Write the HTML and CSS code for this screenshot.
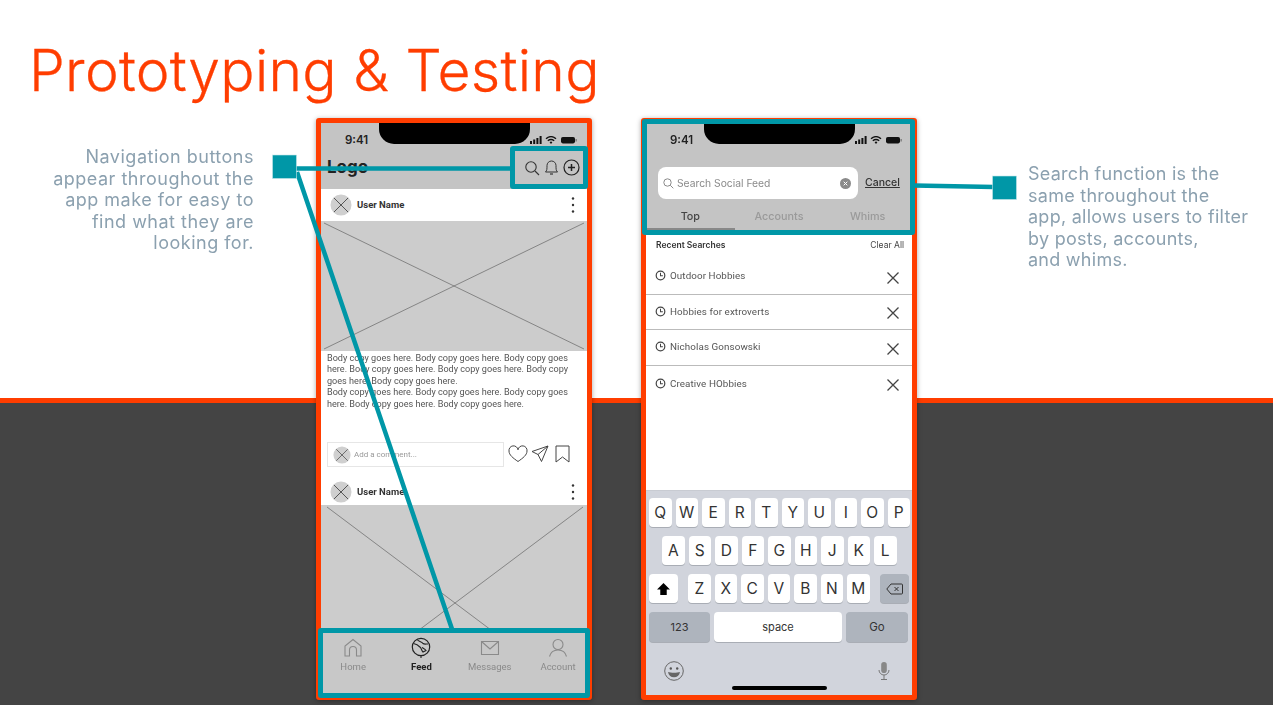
FILE: index.html
```html
<!DOCTYPE html>
<html lang="en">
<head>
<meta charset="utf-8">
<title>Prototyping &amp; Testing</title>
<link rel="stylesheet" href="styles.css">
</head>
<body>
<svg class="defs" width="0" height="0" aria-hidden="true">
  <symbol id="status" viewBox="0 0 47 8">
    <rect x="0" y="5" width="2" height="3" fill="#111"/><rect x="3.2" y="3.5" width="2" height="4.5" fill="#111"/><rect x="6.4" y="2" width="2" height="6" fill="#111"/><rect x="9.6" y="0" width="2" height="8" fill="#111"/>
    <path d="M16 2.8c3-2.6 7-2.6 10 0M17.8 4.8c2-1.6 4.400-1.600 6.400 0" fill="none" stroke="#111" stroke-width="1.400"/><path d="M19.600 6.200c1-.8 1.800-.8 2.800 0L21 8z" fill="#111"/>
    <rect x="31" y="1" width="14" height="6.400" rx="1.800" fill="#111"/><rect x="45.500" y="3" width="1.300" height="2.500" fill="#777"/>
  </symbol>
  <symbol id="ximg" viewBox="0 0 22 22">
    <circle cx="11" cy="11" r="10.500" fill="#cfcfcf"/><path d="M4 4l14 14M18 4L4 18" stroke="#555" stroke-width="1"/>
  </symbol>
  <symbol id="dots" viewBox="0 0 4 18">
    <circle cx="2" cy="2.500" r="1.200" fill="#333"/><circle cx="2" cy="9" r="1.200" fill="#333"/><circle cx="2" cy="15.500" r="1.200" fill="#333"/>
  </symbol>
  <symbol id="clock" viewBox="0 0 12 12">
    <circle cx="6" cy="6" r="4.700" fill="none" stroke="#444" stroke-width="1.300"/><path d="M6 3v3.200h2.600" fill="none" stroke="#444" stroke-width="1.100"/>
  </symbol>
  <symbol id="cross" viewBox="0 0 14 14">
    <path d="M1.500 1.500l11 11M12.500 1.500l-11 11" stroke="#444" stroke-width="1.300"/>
  </symbol>
</svg>

<div class="slide">
  <div class="band-top"></div>
  <div class="band-bottom"></div>

  <div class="stage">
    <h1 class="title">Prototyping &amp; Testing</h1>
    <div class="row">
      <p class="callout callout-left">Navigation buttons<br>appear throughout the<br>app make for easy to<br>find what they are<br>looking for.</p>

      <section class="phone phone-feed">
        <header class="head head-feed">
          <div class="status"><span class="time">9:41</span><div class="notch"></div><svg class="status-icons"><use href="#status"/></svg></div>
          <div class="navrow">
            <span class="logo">Logo</span>
            <div class="nav-icons">
              <svg width="16" height="16" viewBox="0 0 16 16"><circle cx="7" cy="7" r="5.200" fill="none" stroke="#333" stroke-width="1.100"/><path d="M11 11l4 4" stroke="#333" stroke-width="1.100"/></svg>
              <svg width="15" height="17" viewBox="0 0 15 17"><path d="M1.500 13c1.500-1.500 1.500-3 1.500-6.500a4.500 4.500 0 0 1 9 0c0 3.500 0 5 1.500 6.500z" fill="none" stroke="#333" stroke-width="1"/><path d="M6 15h3" stroke="#333" stroke-width="1.200"/></svg>
              <svg width="17" height="17" viewBox="0 0 17 17"><circle cx="8.500" cy="8.500" r="7.500" fill="none" stroke="#222" stroke-width="1.200"/><path d="M8.500 5v7M5 8.500h7" stroke="#222" stroke-width="1.500"/></svg>
            </div>
          </div>
        </header>
        <div class="user user-a"><svg class="avatar"><use href="#ximg"/></svg><span class="uname">User Name</span><svg class="dots"><use href="#dots"/></svg></div>
        <div class="img img-a"><svg viewBox="0 0 266 130" preserveAspectRatio="none"><path d="M3 2l260 126M3 128L263 2" stroke="#666" stroke-width=".7"/></svg></div>
        <div class="body-copy">Body copy goes here. Body copy goes here. Body copy goes here. Body copy goes here. Body copy goes here. Body copy goes here. Body copy goes here.<br>Body copy goes here. Body copy goes here. Body copy goes here. Body copy goes here. Body copy goes here.</div>
        <div class="actions">
          <div class="comment"><svg class="avatar-s"><use href="#ximg"/></svg><span>Add a comment...</span></div>
          <svg width="20" height="18" viewBox="0 0 20 18"><path d="M10 16.500C5 13 1 10 1 6a4.500 4.500 0 0 1 9-1.200A4.500 4.500 0 0 1 19 6c0 4-4 7-9 10.500z" fill="none" stroke="#444" stroke-width="1"/></svg>
          <svg class="plane" width="18" height="18" viewBox="0 0 18 18"><path d="M17 1L1 6.500l6 3 3.500 7zM17 1L7 9.500" fill="none" stroke="#444" stroke-width="1"/></svg>
          <svg class="mark" width="15" height="18" viewBox="0 0 15 18"><path d="M1 1h13v16l-6.500-5L1 17z" fill="none" stroke="#444" stroke-width="1"/></svg>
        </div>
        <div class="user user-b"><svg class="avatar"><use href="#ximg"/></svg><span class="uname">User Name</span><svg class="dots"><use href="#dots"/></svg></div>
        <div class="img img-b"><svg viewBox="0 0 266 196" preserveAspectRatio="none"><path d="M6 2l256 192M262 2L6 194" stroke="#666" stroke-width=".7"/></svg></div>
        <nav class="tabs">
          <div class="tab"><svg width="20" height="20" viewBox="0 0 20 20"><path d="M2 18V8l8-6.500L18 8v10h-4.500v-6a3.500 3.500 0 0 0-7 0v6z" fill="none" stroke="#8a8a8a" stroke-width="1.100"/></svg><span>Home</span></div>
          <div class="tab tab-on"><svg class="feed-icon" width="20" height="22" viewBox="0 0 20 22"><circle cx="10" cy="10" r="8.700" fill="none" stroke="#222" stroke-width="1.200"/><path d="M2.500 6.500c3 .5 5 2 7 4 1 1.500 1 3 2.500 4.500l3-1.500c-1-1.500-2.500-2-4-3M6 2.500c2 2.500 5 2 6 4 1 1 3 .5 5 .5M10 18v3" fill="none" stroke="#222" stroke-width="1.100"/></svg><span>Feed</span></div>
          <div class="tab"><svg width="20" height="20" viewBox="0 0 20 20"><path d="M1.500 3.500h17v13h-17zM1.500 3.500L10 11l8.500-7.500" fill="none" stroke="#8a8a8a" stroke-width="1.100"/></svg><span>Messages</span></div>
          <div class="tab"><svg width="20" height="20" viewBox="0 0 20 20"><circle cx="10" cy="6.500" r="5" fill="none" stroke="#8a8a8a" stroke-width="1.100"/><path d="M1.500 18.500c1-4 4-6.500 8.500-6.500s7.500 2.500 8.500 6.500" fill="none" stroke="#8a8a8a" stroke-width="1.100"/></svg><span>Account</span></div>
        </nav>
        <div class="teal teal-nav"></div>
        <div class="teal teal-tabs"></div>
      </section>

      <section class="phone phone-search">
        <header class="head head-search">
          <div class="status"><span class="time">9:41</span><div class="notch"></div><svg class="status-icons"><use href="#status"/></svg></div>
          <div class="search-row">
            <div class="search-box">
              <svg width="11" height="11" viewBox="0 0 11 11"><circle cx="4.500" cy="4.500" r="3.700" fill="none" stroke="#8a8a8a" stroke-width="1"/><path d="M7.300 7.300l3 3" stroke="#8a8a8a" stroke-width="1"/></svg>
              <span class="placeholder">Search Social Feed</span>
              <svg class="clear" width="11" height="11" viewBox="0 0 11 11"><circle cx="5.500" cy="5.500" r="5.500" fill="#8a8a8a"/><path d="M3.700 3.700l3.600 3.600M7.300 3.700L3.700 7.300" stroke="#fff" stroke-width="1"/></svg>
            </div>
            <span class="cancel">Cancel</span>
          </div>
          <div class="seg"><span class="seg-item seg-on">Top</span><span class="seg-item">Accounts</span><span class="seg-item">Whims</span></div>
        </header>
        <div class="recent"><strong>Recent Searches</strong><span>Clear All</span></div>
        <ul class="results">
          <li class="result"><svg class="clock"><use href="#clock"/></svg><span>Outdoor Hobbies</span><svg class="cross"><use href="#cross"/></svg></li>
          <li class="result"><svg class="clock"><use href="#clock"/></svg><span>Hobbies for extroverts</span><svg class="cross"><use href="#cross"/></svg></li>
          <li class="result"><svg class="clock"><use href="#clock"/></svg><span>Nicholas Gonsowski</span><svg class="cross"><use href="#cross"/></svg></li>
          <li class="result"><svg class="clock"><use href="#clock"/></svg><span>Creative HObbies</span><svg class="cross"><use href="#cross"/></svg></li>
        </ul>
        <div class="keyboard">
          <div class="keys"><span class="key">Q</span><span class="key">W</span><span class="key">E</span><span class="key">R</span><span class="key">T</span><span class="key">Y</span><span class="key">U</span><span class="key">I</span><span class="key">O</span><span class="key">P</span></div>
          <div class="keys keys-mid"><span class="key">A</span><span class="key">S</span><span class="key">D</span><span class="key">F</span><span class="key">G</span><span class="key">H</span><span class="key">J</span><span class="key">K</span><span class="key">L</span></div>
          <div class="keys">
            <span class="key key-wide"><svg width="13" height="12" viewBox="0 0 14 13"><path d="M7 0l7 7h-3.500v6h-7V7H0z" fill="#000"/></svg></span>
            <span class="key key-z">Z</span><span class="key">X</span><span class="key">C</span><span class="key">V</span><span class="key">B</span><span class="key">N</span><span class="key">M</span>
            <span class="key key-wide key-dark key-back"><svg width="17" height="12" viewBox="0 0 17 12"><path d="M5 1h10.500a1 1 0 0 1 1 1v8a1 1 0 0 1-1 1H5L.8 6zM8.500 4l4 4M12.500 4l-4 4" fill="none" stroke="#333" stroke-width="1"/></svg></span>
          </div>
          <div class="keys keys-bottom"><span class="key key-dark key-num">123</span><span class="key key-space">space</span><span class="key key-dark key-go">Go</span></div>
          <div class="kb-foot">
            <svg width="20" height="20" viewBox="0 0 20 20"><circle cx="10" cy="10" r="9.300" fill="none" stroke="#666" stroke-width="1"/><circle cx="6.800" cy="7.500" r="1.200" fill="#555"/><circle cx="13.200" cy="7.500" r="1.200" fill="#555"/><path d="M4 11c3 1 9 1 12 0-.5 3.500-3 5.300-6 5.300S4.500 14.500 4 11z" fill="#666"/></svg>
            <svg width="12" height="20" viewBox="0 0 12 20"><rect x="3.200" y="1" width="5.600" height="11" rx="2.800" fill="#888"/><path d="M1 9a5 5 0 0 0 10 0M6 14v4M3 18.500h6" fill="none" stroke="#777" stroke-width="1"/></svg>
          </div>
          <div class="home-bar"></div>
        </div>
        <div class="teal teal-search"></div>
      </section>

      <p class="callout callout-right">Search function is the<br>same throughout the<br>app, allows users to filter<br>by posts, accounts,<br>and whims.</p>
    </div>
  </div>

  <svg class="connectors" width="1273" height="705" viewBox="0 0 1273 705" aria-hidden="true">
    <path d="M295 168.500h218M297 172l156 460M914 185.500l80 1.500" fill="none" stroke="#0097a7" stroke-width="4.500"/>
    <rect x="272.500" y="155" width="24" height="23.500" fill="#0097a7" stroke="#c5e6ea" stroke-width=".6"/>
    <rect x="992.500" y="176" width="24" height="23.500" fill="#0097a7" stroke="#c5e6ea" stroke-width=".6"/>
  </svg>
</div>
</body>
</html>
```
FILE: styles.css
```css
* { box-sizing: border-box; }
html, body { margin: 0; padding: 0; }
body { background: #fff; font-family: "Inter", "Liberation Sans", sans-serif; overflow: hidden; }
.defs { position: absolute; }

.slide { position: relative; width: 1273px; height: 705px; overflow: hidden; display: flex; flex-direction: column; }
.band-top { height: 403px; background: #fff; border-bottom: 5px solid #ff3d00; }
.band-bottom { flex: 1; background: #444; }

.stage { position: absolute; inset: 0; filter: blur(.35px); }
.title { margin: 0; height: 118px; padding: 36px 0 0 29px; font-size: 57px; line-height: 70px; font-weight: 300; color: #ff3d00; white-space: nowrap; letter-spacing: .28px; -webkit-text-stroke: .3px #ff3d00; }
.row { display: flex; align-items: flex-start; }

.callout { margin: 0; font-size: 18px; line-height: 21.500px; color: #8ba0af; white-space: nowrap; }
.callout-left { width: 254px; margin-top: 28px; margin-right: 62px; text-align: right; letter-spacing: .5px; }
.callout-right { margin-top: 45px; margin-left: 111px; letter-spacing: .26px; }

.phone { position: relative; width: 276px; height: 582px; border: 5px solid #ff3d00; border-radius: 3px; background: #fff; display: flex; flex-direction: column; box-shadow: 0 1px 5px rgba(0,0,0,.35); font-family: "Roboto", sans-serif; flex: none; }
.phone-search { margin-left: 49px; }

.head { background: #c4c4c4; flex: none; }
.head-feed { height: 66px; }
.head-search { height: 112px; }
.status { position: relative; height: 28px; padding: 11px 0 0 24px; }
.time { display: block; font: 600 11.500px/12px "Inter", sans-serif; color: #222; }
.notch { position: absolute; left: 58px; top: 0; width: 151px; height: 21px; background: #000; border-radius: 0 0 15px 15px; }
.status-icons { position: absolute; left: 209px; top: 13px; width: 47px; height: 8px; }

.navrow { height: 38px; display: flex; align-items: flex-start; justify-content: space-between; padding: 6px 7px 0 6px; }
.logo { font: 700 17px/20px "Inter", sans-serif; color: #222; }
.nav-icons { display: flex; align-items: center; gap: 4px; padding-top: 2px; }

.user { flex: none; display: flex; align-items: center; background: #fff; padding: 0 10px 0 9px; }
.user-a { height: 32px; }
.user-b { height: 27px; }
.avatar { width: 22px; height: 22px; flex: none; }
.uname { margin-left: 5px; font: 700 9.500px/12px "Roboto", sans-serif; color: #333; flex: 1; }
.dots { width: 4px; height: 18px; margin-right: 2px; }

.img { flex: none; background: #ccc; overflow: hidden; }
.img svg { display: block; width: 100%; height: 100%; }
.img-a { height: 130px; }
.img-b { height: 124px; }
.img-b svg { height: 196px; width: 266px; }

.body-copy { flex: none; height: 91px; padding: 2px 12px 0 6px; font-size: 9.100px; line-height: 11.400px; color: #555; }
.actions { flex: none; height: 36px; display: flex; align-items: flex-start; padding-left: 6px; }
.actions > svg { margin-top: 3px; margin-left: 4px; }
.actions > .plane { margin-left: 3px; }
.actions > .mark { margin-left: 6px; margin-top: 3px; }
.comment { width: 177px; height: 25px; border: 1px solid #e6e6e6; display: flex; align-items: center; padding-left: 5px; font-size: 8px; color: #999; }
.avatar-s { width: 18px; height: 18px; margin-right: 3px; flex: none; }

.tabs { flex: none; height: 66px; background: #c8c8c8; display: grid; grid-template-columns: repeat(4, 68.300px); margin-left: -2px; padding-top: 8px; width: 268px; }
.tab { display: flex; flex-direction: column; align-items: center; font-size: 9.500px; line-height: 12px; color: #8a8a8a; }
.tab svg { height: 20px; margin: 1px 0 3px; }
.tab .feed-icon { height: 22px; width: 20px; margin: 0 0 2px; }
.tab-on { color: #222; font-weight: 700; }

.teal { position: absolute; border: 5px solid #0097a7; border-radius: 3px; }
.teal-nav { left: 189px; top: 23px; width: 78px; height: 43px; }
.teal-tabs { left: -3px; top: 505px; width: 272px; height: 70px; border-width: 5px; }
.teal-search { left: -4px; top: -4px; width: 273px; height: 116px; }

.search-row { display: flex; align-items: center; height: 32px; margin-top: 16px; padding-left: 12px; }
.search-box { width: 200px; height: 32px; background: #fff; border-radius: 8px; display: flex; align-items: center; padding: 0 7px 0 5px; }
.placeholder { flex: 1; margin-left: 3px; font: 400 10.300px/12px "Inter", sans-serif; color: #8a8a8a; }
.cancel { margin-left: 7px; font: 500 10.500px/12px "Inter", sans-serif; color: #333; text-decoration: underline; }
.seg { display: grid; grid-template-columns: repeat(3, 88.700px); height: 33px; }
.seg-item { text-align: center; padding-top: 12px; font: 500 10.800px/12px "Inter", sans-serif; color: #9a9a9a; }
.seg-on { color: #444; border-bottom: 2px solid #888; height: 31px; }

.recent { flex: none; height: 24px; padding: 4px 8px 0 10px; display: flex; justify-content: space-between; font: 8.500px/12px "Inter", sans-serif; color: #444; }
.recent strong { font-weight: 600; color: #333; }
.results { list-style: none; margin: 0; padding: 0; flex: 1; }
.result { height: 35.600px; border-bottom: 1px solid #bbb; display: flex; align-items: center; padding: 0 12px 0 9px; font-size: 9.800px; color: #555; letter-spacing: .1px; }
.result:last-child { border-bottom: 0; }
.result span { flex: 1; margin-left: 4px; padding-bottom: 1px; }
.clock { width: 11px; height: 11px; flex: none; margin-bottom: 1px; }
.cross { width: 14px; height: 14px; flex: none; margin-top: 3px; }

.keyboard { flex: none; height: 205px; background: #d1d4dc; padding: 7px 3px 0; position: relative; border-top: 1px solid #c8cbd2; }
.keys { display: flex; gap: 4px; height: 29px; margin-bottom: 9px; }
.keys-mid { padding-left: 13px; }
.keys-bottom { height: 30px; margin-bottom: 0; }
.key { width: 22.500px; flex: none; background: #fff; border-radius: 4px; box-shadow: 0 1px 0 #a9adb5; display: flex; align-items: center; justify-content: center; font: 400 15.500px/1 "Inter", sans-serif; color: #333; }
.key-wide { width: 29px; }
.key-z { margin-left: 6px; }
.key-back { margin-left: 6px; }
.key-dark { background: #aeb4bd; }
.key-num { width: 61px; font-size: 11px; }
.key-space { width: 128px; font-size: 11px; }
.key-go { width: 62px; font-size: 11.500px; padding-top: 2px; }
.kb-foot { display: flex; justify-content: space-between; align-items: center; padding: 19px 19px 0 15px; }
.home-bar { position: absolute; left: 86px; bottom: 5px; width: 95px; height: 4px; background: #000; border-radius: 2px; }

.connectors { position: absolute; left: 0; top: 0; filter: blur(.35px); }
```
